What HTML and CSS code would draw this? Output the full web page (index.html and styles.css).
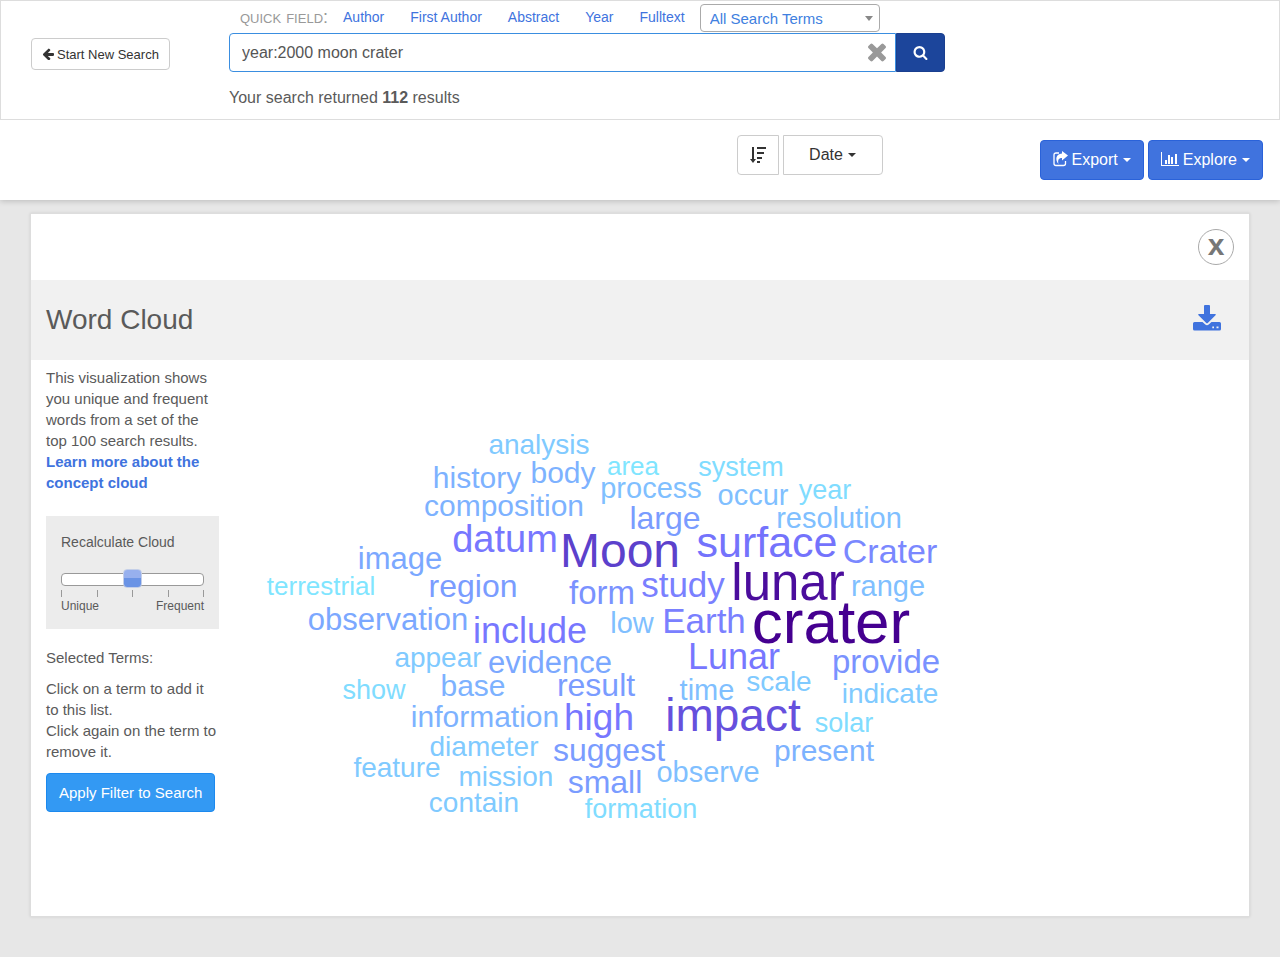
FILE: index.html
```html
<!DOCTYPE html>
<html lang="en">
<head>
<meta charset="utf-8">
<title>Word Cloud</title>
<meta name="viewport" content="width=device-width, initial-scale=1">
<link rel="stylesheet" href="styles.css">
</head>
<body>
<header class="page-header">
  <div class="search-bar">
    <div class="search-cell start-cell">
      <button type="button" class="btn btn-small">
        <svg class="icon-small" viewBox="64 100 1600 1600" aria-hidden="true"><path d="M1664 896v128q0 53-32.500 90.500t-84.500 37.500h-704l293 294q38 36 38 90t-38 90l-75 76q-37 37-90 37-52 0-91-37l-651-652q-37-37-37-90 0-52 37-91l651-650q38-38 91-38 52 0 90 38l75 74q38 38 38 91t-38 91l-293 293h704q52 0 84.500 37.500t32.500 90.500z"/></svg>
        Start New Search
      </button>
    </div>
    <form class="search-cell">
      <div class="quick-fields">
        <span class="quick-label">quick field:</span>
        <a href="#author">Author</a>
        <a href="#first-author">First Author</a>
        <a href="#abstract">Abstract</a>
        <a href="#year">Year</a>
        <a href="#fulltext">Fulltext</a>
        <div class="term-select">
          <select aria-label="Search terms"><option>All Search Terms</option></select>
          <span class="select-arrow"></span>
        </div>
      </div>
      <div class="query-row">
        <input class="query" type="text" aria-label="Search query" value="year:2000 moon crater">
        <button type="button" class="clear-btn" aria-label="Clear search">
          <svg viewBox="302 334 1188 1188" aria-hidden="true"><path d="M1490 1322q0 40-28 68l-136 136q-28 28-68 28t-68-28l-294-294-294 294q-28 28-68 28t-68-28l-136-136q-28-28-28-68t28-68l294-294-294-294q-28-28-28-68t28-68l136-136q28-28 68-28t68 28l294 294 294-294q28-28 68-28t68 28l136 136q28 28 28 68t-28 68l-294 294 294 294q28 28 28 68z"/></svg>
        </button>
        <button type="submit" class="search-btn" aria-label="Search">
          <svg viewBox="0 0 1792 1792" aria-hidden="true"><path d="M1216 832q0-185-131.500-316.500t-316.500-131.500-316.500 131.500-131.500 316.500 131.500 316.500 316.500 131.500 316.500-131.500 131.500-316.500zm512 832q0 52-38 90t-90 38q-54 0-90-38l-343-342q-179 124-399 124-143 0-273.500-55.500t-225-150-150-225-55.500-273.500 55.500-273.500 150-225 225-150 273.500-55.500 273.500 55.500 225 150 150 225 55.500 273.500q0 220-124 399l343 343q37 37 37 90z"/></svg>
        </button>
      </div>
      <p class="result-count">Your search returned <strong>112</strong> results</p>
    </form>
  </div>
  <div class="toolbar">
    <div class="sort-group">
      <button type="button" class="btn sort-dir" aria-label="Sort direction">
        <svg width="16" height="18" viewBox="0 0 16 18" aria-hidden="true"><path d="M2 1h2v12h2l-3 4-3-4h2zM7 1h9v2H7zM7 6h7v2H7zM7 11h5v2H7zM7 15h3v2H7z"/></svg>
      </button>
      <button type="button" class="btn sort-field">Date <span class="caret"></span></button>
    </div>
    <div class="action-group">
      <button type="button" class="btn btn-primary">
        <svg width="15" height="18" viewBox="0 0 15 18" aria-hidden="true"><path d="M6 2H3Q1 2 1 4v8.500q0 2 2 2h7.500q2 0 2-2v-2.500" fill="none" stroke="currentColor" stroke-width="1.300"/><path d="M9 0l6 4.500L9 9.500V7C6 7 4.500 8.500 5.500 13 2 9 2.500 3 9 2.500z"/></svg>
        Export <span class="caret"></span>
      </button>
      <button type="button" class="btn btn-primary">
        <svg width="18" height="16" viewBox="0 0 18 16" aria-hidden="true"><path d="M0 0h1v13h17v1H0zM4 8h2v4H4zM7 3h2v9H7zM10 5h2v7h-2zM14 2h2v10h-2z"/></svg>
        Explore <span class="caret"></span>
      </button>
    </div>
  </div>
</header>

<main class="panel">
  <div class="panel-top">
    <button type="button" class="close-btn" aria-label="Close">x</button>
  </div>
  <div class="panel-title">
    <h1>Word Cloud</h1>
    <button type="button" class="download-btn" aria-label="Download">
      <svg width="28" height="26" viewBox="0 0 28 26" aria-hidden="true"><path d="M11 1q0-1 1-1h4q1 0 1 1v8h5q1.500 0 .5 1.200l-7.500 7.500q-1 1-2 0l-7.500-7.500Q4.500 9 6 9h5z"/><path d="M1.500 17h8l2.500 2.300q2 1.800 4 0L18.500 17h8q1.500 0 1.500 1.500v5.500q0 1.500-1.500 1.500h-25Q0 25.500 0 24v-5.500Q0 17 1.500 17zM19.300 21.500v1.700H21v-1.700zM23.500 21.500v1.700h2v-1.700z" fill-rule="evenodd"/></svg>
    </button>
  </div>
  <div class="panel-body">
    <aside class="sidebar">
      <p>This visualization shows you unique and frequent words from a set of the top 100 search results. <a class="learn" href="#learn">Learn more about the concept cloud</a></p>
      <div class="slider-box">
        <label for="cloud-range">Recalculate Cloud</label>
        <input id="cloud-range" type="range" min="0" max="4" value="2">
        <div class="ticks"><i></i><i></i><i></i><i></i><i></i></div>
        <div class="slider-ends"><span>Unique</span><span>Frequent</span></div>
      </div>
      <p>Selected Terms:</p>
      <p class="hint">Click on a term to add it to this list.<br>Click again on the term to remove it.</p>
      <button type="button" class="btn apply-btn">Apply Filter to Search</button>
    </aside>
    <svg class="cloud" role="img" aria-label="Word cloud">
      <g transform="translate(-234 -360)">
        <text class="s28" x="539" y="454">analysis</text>
        <text class="s30" x="477" y="488">history</text>
        <text class="s30" x="563" y="483">body</text>
        <text class="s26" x="633" y="475">area</text>
        <text class="s27" x="741" y="476">system</text>
        <text class="s29" x="651" y="498">process</text>
        <text class="s29" x="753" y="505">occur</text>
        <text class="s27" x="825" y="499">year</text>
        <text class="s30" x="504" y="516">composition</text>
        <text class="s32" x="665" y="529">large</text>
        <text class="s29" x="839" y="528">resolution</text>
        <text class="s38" x="505" y="552">datum</text>
        <text class="s48" x="620" y="567">Moon</text>
        <text class="s43" x="767" y="557">surface</text>
        <text class="s34" x="890" y="563">Crater</text>
        <text class="s31" x="400" y="569">image</text>
        <text class="s26" x="321" y="595">terrestrial</text>
        <text class="s32" x="473" y="597">region</text>
        <text class="s33" x="602" y="604">form</text>
        <text class="s35" x="683" y="597">study</text>
        <text class="s51" x="788" y="600">lunar</text>
        <text class="s29" x="888" y="596">range</text>
        <text class="s31" x="388" y="630">observation</text>
        <text class="s36" x="530" y="643">include</text>
        <text class="s29" x="632" y="633">low</text>
        <text class="s35" x="704" y="633">Earth</text>
        <text class="s62" x="831" y="643">crater</text>
        <text class="s28" x="438" y="667">appear</text>
        <text class="s31" x="550" y="673">evidence</text>
        <text class="s36" x="734" y="669">Lunar</text>
        <text class="s33" x="886" y="673">provide</text>
        <text class="s27" x="374" y="699">show</text>
        <text class="s30" x="473" y="696">base</text>
        <text class="s32" x="596" y="696">result</text>
        <text class="s29" x="707" y="700">time</text>
        <text class="s28" x="779" y="691">scale</text>
        <text class="s28" x="890" y="703">indicate</text>
        <text class="s30" x="485" y="727">information</text>
        <text class="s37" x="599" y="730">high</text>
        <text class="s46" x="733" y="731">impact</text>
        <text class="s27" x="844" y="732">solar</text>
        <text class="s28" x="484" y="756">diameter</text>
        <text class="s32" x="609" y="761">suggest</text>
        <text class="s30" x="824" y="761">present</text>
        <text class="s28" x="397" y="777">feature</text>
        <text class="s28" x="506" y="786">mission</text>
        <text class="s32" x="605" y="793">small</text>
        <text class="s29" x="708" y="782">observe</text>
        <text class="s28" x="474" y="812">contain</text>
        <text class="s27" x="641" y="818">formation</text>
      </g>
    </svg>
  </div>
</main>
</body>
</html>
```
FILE: styles.css
```css
* { box-sizing: border-box; }

body {
  margin: 0;
  background: #e7e7e7;
  color: #5a5a5a;
  font-family: "Liberation Sans", Arial, sans-serif;
  font-size: 15px;
  line-height: 21px;
}

a { color: #4073de; text-decoration: none; }
p { margin: 0; }
button, input, select { font-family: inherit; }
button { cursor: pointer; }
svg { fill: currentColor; }

.page-header {
  background: #fff;
  box-shadow: 0 1px 6px rgba(0, 0, 0, 0.2);
}

.search-bar {
  display: grid;
  grid-template-columns: minmax(0, 2fr) minmax(0, 7fr) minmax(0, 3fr);
  border: 1px solid #ddd;
  height: 120px;
}

.search-cell { padding: 3px 15px 0; }
.start-cell { padding: 37px 15px 0 30px; }

.btn {
  display: inline-flex;
  align-items: center;
  justify-content: center;
  gap: 4px;
  padding: 0 12px;
  border: 1px solid #ccc;
  border-radius: 4px;
  background: #fff;
  color: #333;
  font-size: 16px;
  height: 40px;
  white-space: nowrap;
}

.btn-small { height: 32px; padding: 0 10px; font-size: 13px; gap: 3px; }
.icon-small { width: 12px; height: 12px; }

.quick-fields {
  display: flex;
  align-items: flex-start;
  gap: 26px;
  height: 29px;
  padding-left: 11px;
  font-size: 14px;
  line-height: 26px;
  white-space: nowrap;
}

.quick-label {
  margin-right: -11px;
  color: #999;
  font-size: 18px;
  font-variant: small-caps;
}

.term-select { position: relative; width: 180px; margin-left: -11px; }

.term-select select {
  display: block;
  width: 100%;
  height: 28px;
  padding: 0 9px;
  appearance: none;
  border: 1px solid #aaa;
  border-radius: 4px;
  background: #fff;
  color: #4080e0;
  font-size: 15px;
}

.select-arrow {
  position: absolute;
  top: 12px;
  right: 7px;
  border: 4px solid transparent;
  border-top: 5px solid #888;
  border-bottom-width: 0;
  pointer-events: none;
}

.query-row { position: relative; display: flex; }

.query {
  flex: 1;
  min-width: 0;
  height: 39px;
  padding: 0 40px 0 12px;
  border: 1px solid #3a8ee0;
  border-radius: 4px 0 0 4px;
  color: #555;
  font-size: 16px;
  outline: 0;
}

.clear-btn {
  position: absolute;
  top: 8px;
  right: 57px;
  padding: 2px;
  border: 0;
  background: none;
  color: #999;
}
.clear-btn svg { display: block; width: 18px; height: 18px; overflow: visible; }

.search-btn {
  display: flex;
  align-items: center;
  justify-content: center;
  width: 49px;
  border: 1px solid #1a3f8f;
  border-radius: 0 4px 4px 0;
  background: #1c459b;
  color: #fff;
}
.search-btn svg { width: 15px; height: 15px; }

.result-count { margin-top: 15px; font-size: 16px; }

.toolbar {
  display: flex;
  justify-content: flex-end;
  align-items: flex-start;
  gap: 157px;
  height: 80px;
  padding: 15px 17px 0;
}

.sort-group, .action-group { display: flex; gap: 4px; }
.action-group { padding-top: 5px; }
.sort-dir { border-radius: 4px 0 0 4px; width: 42px; }
.sort-field { border-radius: 0 4px 4px 0; width: 100px; }
.btn-primary { border-color: #2a62d9; background: #4073de; color: #fff; }

.caret {
  margin-left: 1px;
  border: 4px solid transparent;
  border-top-color: currentColor;
  border-bottom-width: 0;
}

.panel {
  margin: 13px 30px 40px;
  border: 1px solid #ddd;
  background: #fff;
  box-shadow: 0 0 3px rgba(0, 0, 0, 0.1);
}

.panel-top { display: flex; justify-content: flex-end; padding: 15px; }

.close-btn {
  width: 36px;
  height: 36px;
  padding: 0 0 5px;
  border: 1px solid #aaa;
  border-radius: 50%;
  background: #fff;
  color: #777;
  font-size: 30px;
  font-weight: bold;
  line-height: 30px;
}

.panel-title {
  display: flex;
  align-items: center;
  justify-content: space-between;
  height: 80px;
  padding: 0 28px 0 15px;
  background: #f1f1f1;
}
.panel-title h1 { margin: 0; font-size: 28px; font-weight: normal; line-height: 32px; }

.download-btn { padding: 0 0 5px; border: 0; background: none; color: #4073de; }
.download-btn svg { display: block; }

.panel-body { display: flex; gap: 15px; padding: 0 15px; }
.sidebar { flex: 0 0 173px; padding-top: 7px; }
.learn { font-weight: bold; }

.slider-box {
  margin: 23px 0 18px;
  padding: 16px 15px 14px;
  background: #ececec;
  font-size: 14px;
}
.slider-box label { display: block; }

.slider-box input {
  display: block;
  width: 100%;
  height: 19px;
  margin: 17px 0 0;
  appearance: none;
  background: none;
}
.slider-box input::-webkit-slider-runnable-track {
  height: 13px;
  border: 1px solid #999;
  border-radius: 4px;
  background: #fff;
}
.slider-box input::-webkit-slider-thumb {
  appearance: none;
  width: 19px;
  height: 19px;
  margin-top: -5px;
  border: 1px solid #c4cfe8;
  border-radius: 4px;
  background: linear-gradient(#97b0ee 50%, #6a93e5 50%);
}

.ticks { display: flex; justify-content: space-between; padding-top: 1px; }
.ticks i { width: 1px; height: 7px; background: #999; }
.slider-ends { display: flex; justify-content: space-between; font-size: 12px; line-height: 18px; }

.hint { margin: 10px 0 11px; }

.apply-btn {
  height: 39px;
  border-color: #1c89ee;
  background: #3399f3;
  color: #fff;
  font-size: 15px;
}

.cloud { flex: 1; min-width: 0; height: 556px; }
.cloud text { text-anchor: middle; cursor: pointer; }

.s26 { font-size: 26px; fill: #80e5ff; }
.s27 { font-size: 27px; fill: #80dcff; }
.s28 { font-size: 28px; fill: #80caff; }
.s29 { font-size: 29px; fill: #80bfff; }
.s30 { font-size: 30px; fill: #7db2ff; }
.s31 { font-size: 31px; fill: #7ba8ff; }
.s32 { font-size: 32px; fill: #7a9cff; }
.s33 { font-size: 33px; fill: #7a92ff; }
.s34 { font-size: 34px; fill: #7a88ff; }
.s35 { font-size: 35px; fill: #7a80ff; }
.s36 { font-size: 36px; fill: #7777ff; }
.s37 { font-size: 37px; fill: #7777ff; }
.s38 { font-size: 38px; fill: #7777ff; }
.s43 { font-size: 43px; fill: #7473fc; }
.s46 { font-size: 46px; fill: #6650dd; }
.s48 { font-size: 48px; fill: #5c41cc; }
.s51 { font-size: 51px; fill: #4b0d9d; }
.s62 { font-size: 62px; fill: #450090; }
```
